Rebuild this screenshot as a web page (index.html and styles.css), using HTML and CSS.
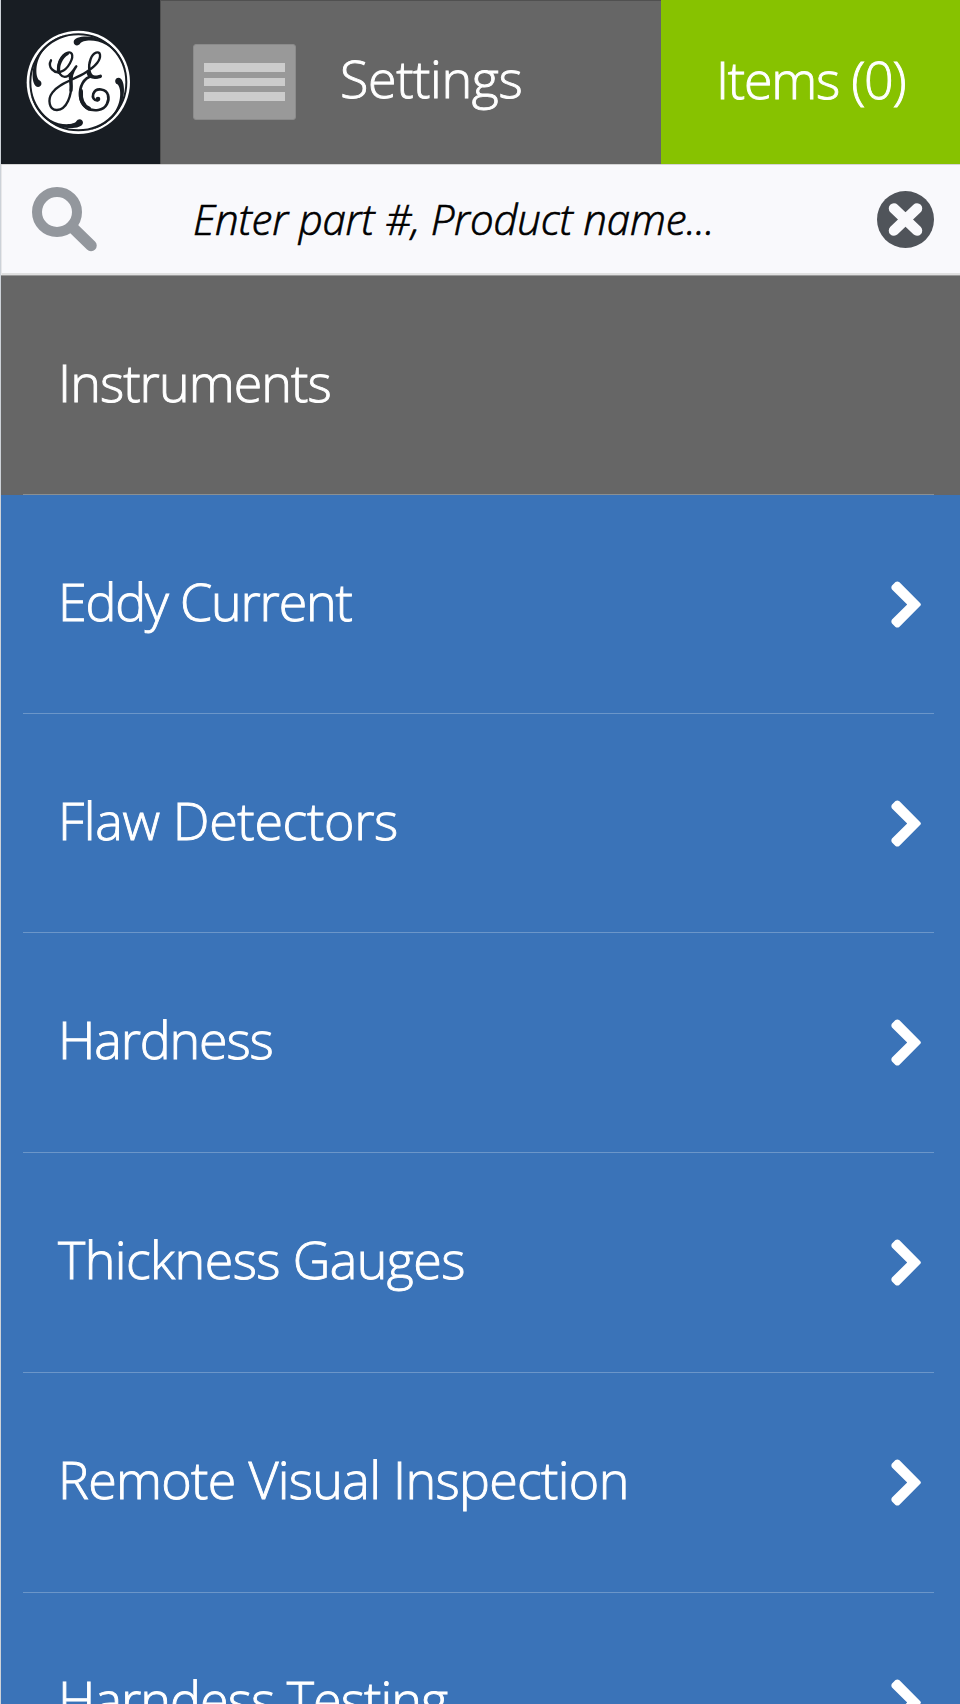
FILE: index.html
```
<!DOCTYPE html>
<html lang="en">
<head>
<meta charset="utf-8">
<title>Instruments</title>
<link rel="stylesheet" href="styles.css">
</head>
<body>
<div class="page">
  <header class="header">
    <a class="logo">
      <svg class="logo-mark" viewBox="76 89 314 314" width="104.67" height="104.67">
        <circle cx="233" cy="246" r="155" fill="#fff"/>
        <circle cx="233" cy="246" r="144" fill="none" stroke="#181d23" stroke-width="6"/>
        <g id="swirls" fill="#181d23">
          <path id="swirl" d="M285 113C262 105 220 108 219 125C219 137 234 139 239 129C246 118 287 115 317 134C346 151 368 182 377 214C367 166 332 123 285 113Z"/>
          <use href="#swirl" transform="rotate(90 233 246)"/>
          <use href="#swirl" transform="rotate(180 233 246)"/>
          <use href="#swirl" transform="rotate(270 233 246)"/>
        </g>
        <g fill="none" stroke="#181d23" stroke-linecap="round" stroke-linejoin="round">
          <path stroke-width="7" d="M151 180C140 200 160 221 181 214C203 207 220 172 213 160C206 149 183 163 175 188C167 216 184 238 203 226C214 219 222 204 227 198C217 212 211 228 212 247C213 286 199 327 169 329C145 330 140 297 155 277C176 247 223 238 256 216C281 200 301 183 298 163C296 151 278 155 270 176C262 197 263 228 286 231L299 228"/>
          <path stroke-width="10" d="M175 216C169 197 182 170 200 160M209 222C208 238 213 248 211 270M263 219C266 230 280 234 299 228"/>
          <path stroke-width="8" d="M274 228C249 231 236 260 238 287C241 320 268 333 293 329C318 326 327 300 322 284C317 265 286 260 278 280C274 292 280 301 291 300"/>
          <path stroke-width="12" d="M241 272C239 296 247 316 265 325"/>
        </g>
        <circle cx="292" cy="296" r="7" fill="#181d23"/>
      </svg>
    </a>
    <div class="settings">
      <span class="burger"><i></i><i></i><i></i></span>
      <span class="label t-settings">Settings</span>
    </div>
    <div class="items"><span class="label t-items">Items (0)</span></div>
  </header>
  <div class="search">
    <svg class="search-icon" viewBox="0 0 65 65" width="65" height="65" fill="none" stroke="#93979d">
      <circle cx="25" cy="25" r="20" stroke-width="10"/>
      <path d="M40 40L59 58.500" stroke-width="11.500" stroke-linecap="round"/>
    </svg>
    <span class="query">Enter part #, Product name...</span>
    <svg class="clear-icon" viewBox="0 0 57 57" width="57" height="57">
      <circle cx="28.500" cy="28.500" r="28.500" fill="#50545a"/>
      <path d="M17 17.500L40 39.500M40 17.500L17 39.500" stroke="#f9f9fc" stroke-width="10.500" stroke-linecap="round"/>
    </svg>
  </div>
  <h1 class="row heading"><span class="label t-instruments">Instruments</span></h1>
  <nav class="menu">
    <a class="row"><span class="label t-eddy">Eddy Current</span><svg class="chevron" viewBox="0 0 30 47" width="30" height="47"><path d="M4.500 1Q6.500 -.3 8.500 1.300L29.300 22.200Q30.500 23.500 29.300 24.800L8.500 45.700Q6.500 47.300 4.500 46L1 42.500Q-.3 40.500 1 38.500L16.200 23.500L1 8.500Q-.3 6.500 1 4.500Z"/></svg></a>
    <a class="row"><span class="label t-flaw">Flaw Detectors</span><svg class="chevron" viewBox="0 0 30 47" width="30" height="47"><path d="M4.500 1Q6.500 -.3 8.500 1.300L29.300 22.200Q30.500 23.500 29.300 24.800L8.500 45.700Q6.500 47.300 4.500 46L1 42.500Q-.3 40.500 1 38.500L16.200 23.500L1 8.500Q-.3 6.500 1 4.500Z"/></svg></a>
    <a class="row tall"><span class="label t-hardness">Hardness</span><svg class="chevron" viewBox="0 0 30 47" width="30" height="47"><path d="M4.500 1Q6.500 -.3 8.500 1.300L29.300 22.200Q30.500 23.500 29.300 24.800L8.500 45.700Q6.500 47.300 4.500 46L1 42.500Q-.3 40.500 1 38.500L16.200 23.500L1 8.500Q-.3 6.500 1 4.500Z"/></svg></a>
    <a class="row tall"><span class="label t-thickness">Thickness Gauges</span><svg class="chevron" viewBox="0 0 30 47" width="30" height="47"><path d="M4.500 1Q6.500 -.3 8.500 1.300L29.300 22.200Q30.500 23.500 29.300 24.800L8.500 45.700Q6.500 47.300 4.500 46L1 42.500Q-.3 40.500 1 38.500L16.200 23.500L1 8.500Q-.3 6.500 1 4.500Z"/></svg></a>
    <a class="row tall"><span class="label t-remote">Remote Visual Inspection</span><svg class="chevron" viewBox="0 0 30 47" width="30" height="47"><path d="M4.500 1Q6.500 -.3 8.500 1.300L29.300 22.200Q30.500 23.500 29.300 24.800L8.500 45.700Q6.500 47.300 4.500 46L1 42.500Q-.3 40.500 1 38.500L16.200 23.500L1 8.500Q-.3 6.500 1 4.500Z"/></svg></a>
    <a class="row tall"><span class="label t-testing">Harndess Testing</span><svg class="chevron" viewBox="0 0 30 47" width="30" height="47"><path d="M4.500 1Q6.500 -.3 8.500 1.300L29.300 22.200Q30.500 23.500 29.300 24.800L8.500 45.700Q6.500 47.300 4.500 46L1 42.500Q-.3 40.500 1 38.500L16.200 23.500L1 8.500Q-.3 6.500 1 4.500Z"/></svg></a>
  </nav>
</div>
</body>
</html>
```
FILE: styles.css
```
* { box-sizing: border-box; }
html, body { margin: 0; height: 1704px; overflow: hidden; }
body {
  font-family: "Open Sans", "Noto Sans", sans-serif;
  font-weight: 300;
  color: #fff;
}
.page {
  width: 960px;
  height: 1704px;
  overflow: hidden;
  border-left: 1px solid #cdd2d8;
  background: #3a73b8;
}
.label { font-size: 52px; line-height: 70px; white-space: nowrap; font-stretch: 90%; -webkit-text-stroke: .9px currentColor; }
.t-settings { letter-spacing: -.4px; }
.t-items { letter-spacing: -1.250px; }
.t-instruments { letter-spacing: -.950px; }
.t-eddy { letter-spacing: -1.200px; }
.t-flaw { letter-spacing: -.350px; }
.t-hardness { letter-spacing: -1.150px; }
.t-thickness { letter-spacing: -.6px; }
.t-remote { letter-spacing: -.7px; }
.t-testing { letter-spacing: -.950px; }
.header { display: grid; grid-template-columns: 159px 501px 1fr; height: 164px; }
.logo { background: #181d23; padding: 29.500px 0 0 24.500px; }
.logo-mark { display: block; }
.settings {
  display: flex;
  align-items: center;
  background: #666;
  border-top: 1px solid #505050;
  border-left: 1px solid #505050;
  padding: 0 0 1px 32px;
}
.settings .label { margin: 0 0 8px 44px; }
.burger {
  display: flex;
  flex-direction: column;
  justify-content: center;
  gap: 6px;
  width: 103px;
  height: 76px;
  padding: 0 10px;
  border: 1px solid #8b8b8b;
  border-radius: 3px;
  background: #999;
}
.burger i { height: 8.500px; background: #ccc; }
.items { background: #87c200; display: flex; align-items: center; padding: 0 0 6px 55px; }
.search {
  display: flex;
  align-items: center;
  height: 112px;
  padding: 0 26px 0 31px;
  background: #f9f9fc;
  border-top: 1px solid #d5d5d5;
  border-bottom: 1px solid #999;
  box-shadow: inset 1px 0 #e8e8ea, inset 0 -2px #e0e0e0;
  color: #000;
}
.search-icon { margin-bottom: 2px; }
.clear-icon { margin-bottom: 2px; }
.query {
  flex: 1;
  margin: 0 0 2px 96px;
  font-size: 42px;
  line-height: 58px;
  font-style: italic;
  letter-spacing: -.190px;
  white-space: nowrap;
  font-stretch: 90%;
  -webkit-text-stroke: .7px currentColor;
}
.row {
  display: flex;
  align-items: center;
  justify-content: space-between;
  height: 219px;
  margin: 0 26px 0 22px;
  padding: 0 13px 0 35px;
  border-bottom: 1px solid #6b96c9;
}
.tall { height: 220px; }
.row .label { margin-bottom: 7px; }
.heading {
  margin: 0;
  padding-left: 57px;
  font-weight: 300;
  background: linear-gradient(#8a8f92, #8a8f92) 22px 100% / 911px 1px no-repeat, #666;
  border-bottom: 0;
}
.chevron { fill: #fff; }
```
